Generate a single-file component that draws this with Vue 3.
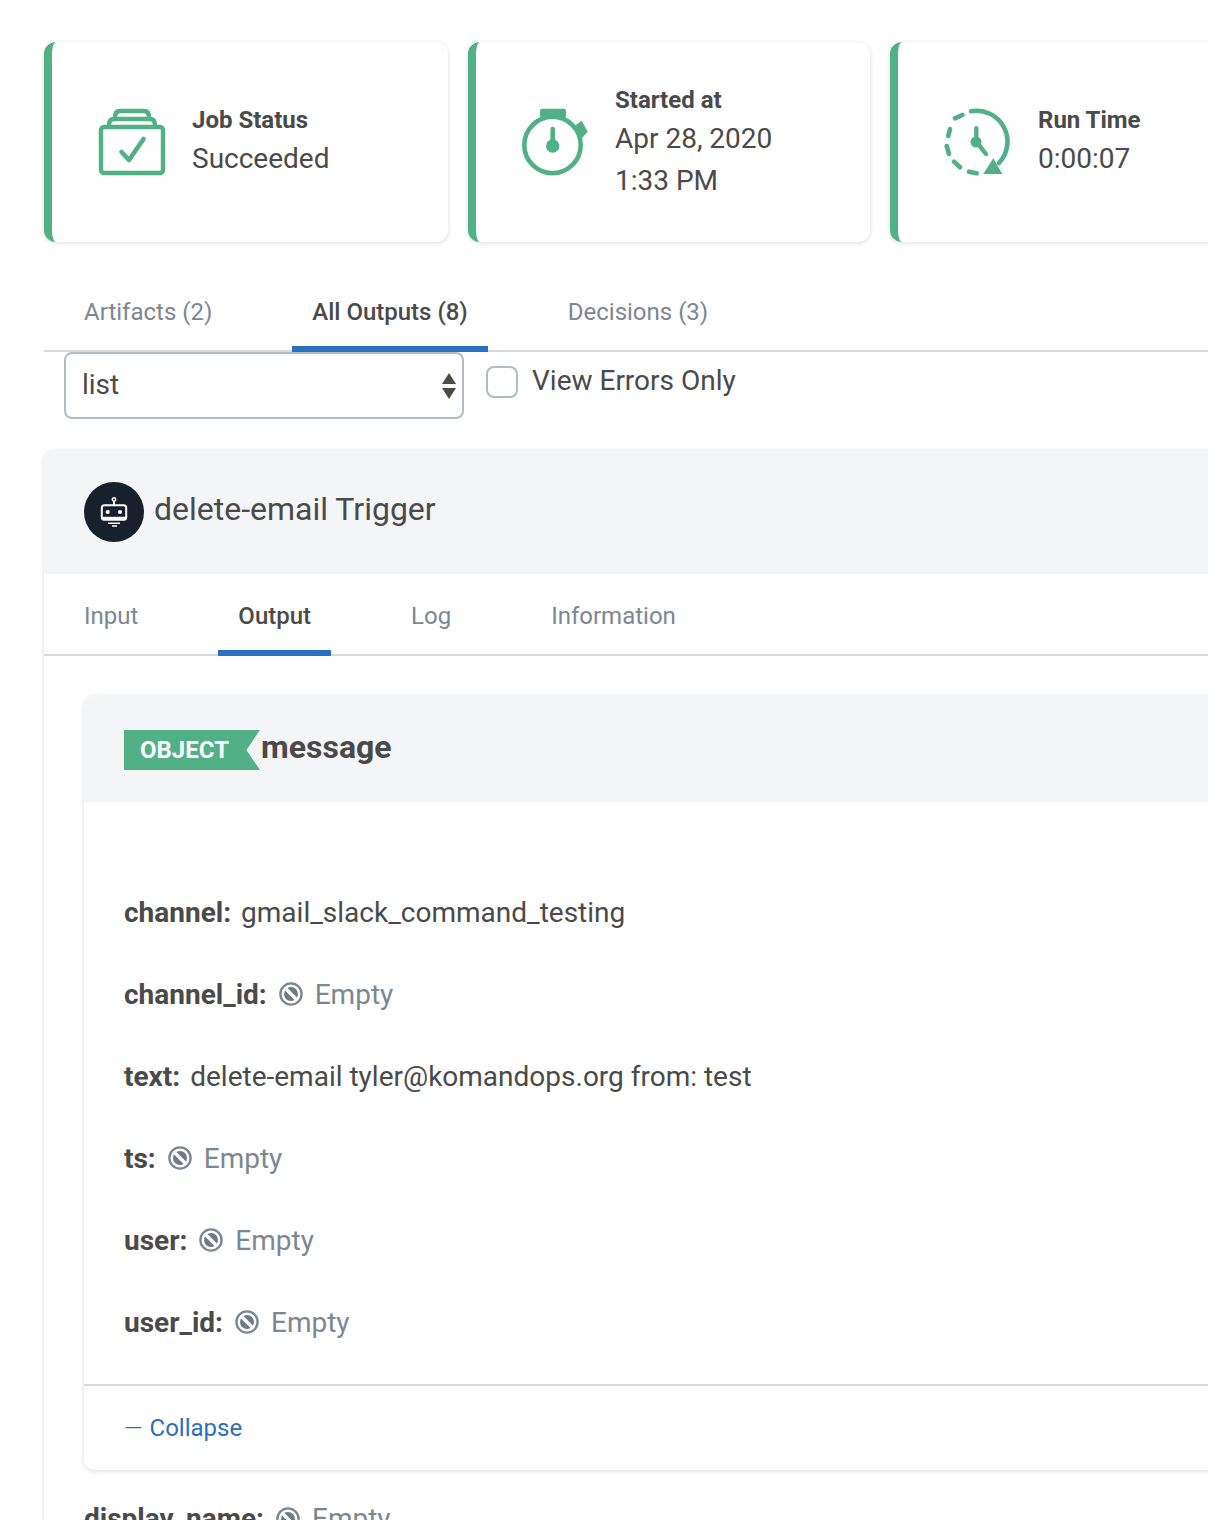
<script setup>
const cards = [
  { title: 'Job Status', lines: ['Succeeded'], icon: 'job' },
  { title: 'Started at', lines: ['Apr 28, 2020', '1:33 PM'], icon: 'watch' },
  { title: 'Run Time', lines: ['0:00:07'], icon: 'run' }
]
const topTabs = [
  { label: 'Artifacts (2)' },
  { label: 'All Outputs (8)', active: true },
  { label: 'Decisions (3)' }
]
const subTabs = [
  { label: 'Input' },
  { label: 'Output', active: true },
  { label: 'Log' },
  { label: 'Information' }
]
const rows = [
  { key: 'channel', value: 'gmail_slack_command_testing' },
  { key: 'channel_id' },
  { key: 'text', value: 'delete-email tyler@komandops.org from: test' },
  { key: 'ts' },
  { key: 'user' },
  { key: 'user_id' }
]
</script>

<template>
  <div class="page">
    <div class="cards">
      <div v-for="c in cards" :key="c.title" class="card" :class="'card-' + c.icon">
        <svg v-if="c.icon === 'job'" class="icon" viewBox="0 0 68 68" fill="none" stroke="#52b087" stroke-width="4.4" stroke-linecap="round" stroke-linejoin="round">
          <rect x="3" y="19" width="62" height="46" rx="3" />
          <path d="M11 17c0-4 2-6 5-6h36c3 0 5 2 5 6" />
          <path d="M17 9c0-4 2-6 5-6h24c3 0 5 2 5 6" />
          <path d="M23.500 44l7.500 8L45.500 31" stroke-width="4.600" />
        </svg>
        <svg v-else-if="c.icon === 'watch'" class="icon" viewBox="0 0 68 68" fill="none" stroke="#52b087" stroke-width="4.600" stroke-linecap="round">
          <circle cx="30.500" cy="37" r="28.200" />
          <rect x="18" y="0.700" width="26" height="9" rx="2" fill="#52b087" stroke="none" />
          <path d="M51 19l8.700-6.300 6 11L60 30z" fill="#52b087" stroke="none" />
          <path d="M30.700 21v17" stroke-width="4.600" />
          <circle cx="30.700" cy="38" r="6.700" fill="#52b087" stroke="none" />
        </svg>
        <svg v-else class="icon" viewBox="0 0 68 68" fill="none" stroke="#52b087" stroke-width="4.600" stroke-linecap="round">
          <path d="M27 3.200A31 31 0 0 1 55 55" />
          <path d="M11 10.300 18.300 7M4.300 28 6 21M2.700 38 5 46M10 53.700 16 59.300M25 63.700 32.700 65.300" />
          <path d="M49.300 50.300 39.300 66H58.300z" fill="#52b087" stroke="none" />
          <path d="M32.300 20.300V33.700L42 46" stroke-width="4.400" />
          <circle cx="32" cy="34" r="5.500" fill="#52b087" stroke="none" />
        </svg>
        <div class="card-text">
          <div class="card-title">{{ c.title }}</div>
          <div v-for="l in c.lines" :key="l" class="card-line">{{ l }}</div>
        </div>
      </div>
    </div>

    <div class="tabs top-tabs">
      <div v-for="t in topTabs" :key="t.label" class="tab" :class="{ active: t.active }">{{ t.label }}</div>
    </div>

    <div class="filters">
      <div class="select">
        <span>list</span>
        <svg class="arrows" width="14" height="26" viewBox="0 0 14 26" fill="#4a4a4a">
          <path d="M7 0l7 11H0z" />
          <path d="M7 26l7-11H0z" />
        </svg>
      </div>
      <label class="check">
        <span class="box"></span>
        <span class="check-label">View Errors Only</span>
      </label>
    </div>

    <div class="panel">
      <div class="panel-head">
        <span class="avatar">
          <svg width="30" height="30" viewBox="0 0 30 30" fill="none" stroke="#fff" stroke-width="2">
            <circle cx="15" cy="2.500" r="1.700" stroke-width="1.500" />
            <path d="M15 4.500v3.700" />
            <rect x="2.800" y="8.200" width="24.400" height="14.600" rx="2.500" />
            <path d="M3 21.300h24" stroke-width="3" />
            <path d="M9 26.300h12M13 29h5" stroke-width="1.600" />
            <circle cx="8.700" cy="15" r="2.100" fill="#fff" stroke="none" />
            <circle cx="21" cy="15" r="2.100" fill="#fff" stroke="none" />
          </svg>
        </span>
        <span class="panel-title">delete-email Trigger</span>
      </div>
      <div class="tabs sub-tabs">
        <div v-for="t in subTabs" :key="t.label" class="tab" :class="{ active: t.active }">{{ t.label }}</div>
      </div>
      <div class="panel-body">
        <div class="object">
          <div class="object-head">
            <span class="tag">OBJECT</span>
            <span class="object-name">message</span>
          </div>
          <div class="object-body">
            <div v-for="r in rows" :key="r.key" class="row">
              <b>{{ r.key }}:</b>
              <span v-if="r.value" class="value">{{ r.value }}</span>
              <span v-else class="empty">
                <svg width="24" height="24" viewBox="0 0 24 24" fill="none" stroke="#7c8791">
                  <circle cx="12" cy="12" r="10.600" stroke-width="2.400" />
                  <circle cx="12" cy="12" r="7" fill="#6f7a84" stroke="none" />
                  <path d="M6 6l12 12" stroke="#fff" stroke-width="3.400" />
                </svg>
                Empty
              </span>
            </div>
          </div>
          <div class="object-foot"><span class="dash">—</span> Collapse</div>
        </div>
        <div class="row after">
          <b>display_name:</b>
          <span class="empty">
            <svg width="24" height="24" viewBox="0 0 24 24" fill="none" stroke="#7c8791">
              <circle cx="12" cy="12" r="10.600" stroke-width="2.400" />
              <circle cx="12" cy="12" r="7" fill="#6f7a84" stroke="none" />
              <path d="M6 6l12 12" stroke="#fff" stroke-width="3.400" />
            </svg>
            Empty
          </span>
        </div>
      </div>
    </div>
  </div>
</template>

<style scoped>
.page {
  width: 1208px;
  height: 1520px;
  overflow: hidden;
  box-sizing: border-box;
  padding: 42px 0 0 44px;
  background: #fff;
  font-family: Roboto, "Liberation Sans", sans-serif;
  color: #4a4a4a;
}
.cards {
  display: flex;
  gap: 20px;
  width: 1300px;
}
.card {
  box-sizing: border-box;
  width: 404px;
  height: 200px;
  flex: none;
  display: flex;
  align-items: center;
  gap: 26px;
  padding-left: 46px;
  padding-bottom: 2px;
  border-left: 8px solid #52b087;
  border-radius: 12px;
  background: #fff;
  box-shadow: 0 1px 5px rgba(0, 0, 0, 0.14);
}
.card-watch {
  width: 402px;
  gap: 25px;
  padding-bottom: 0;
}
.card .icon {
  position: relative;
  top: 1px;
}
.card-watch .icon {
  top: 0;
}
.icon {
  width: 68px;
  height: 68px;
  flex: none;
}
.card-title {
  font-size: 24px;
  font-weight: 700;
  line-height: 36px;
}
.card-line {
  font-size: 28px;
  line-height: 42px;
}
.tabs {
  display: flex;
  gap: 60px;
  padding-left: 20px;
  border-bottom: 2px solid #d5d9dc;
  font-size: 24px;
}
.tab {
  box-sizing: border-box;
  padding: 0 20px;
  line-height: 68px;
  height: 74px;
  margin-bottom: -2px;
  color: #7c8791;
}
.sub-tabs .tab {
  line-height: 84px;
  height: 82px;
}
.tab.active {
  color: #4a4a4a;
  font-weight: 500;
  border-bottom: 6px solid #2b6fc2;
}
.top-tabs {
  margin-top: 36px;
}
.filters {
  display: flex;
  align-items: flex-start;
  gap: 22px;
  padding-left: 20px;
}
.select {
  box-sizing: border-box;
  width: 400px;
  height: 67px;
  display: flex;
  align-items: center;
  justify-content: space-between;
  padding: 0 6px 2px 16px;
  border: 2px solid #b3bcc4;
  border-radius: 8px;
  font-size: 28px;
}
.arrows {
  flex: none;
  position: relative;
  top: 1px;
}
.check {
  display: flex;
  align-items: center;
  gap: 14px;
  margin-top: 14px;
  font-size: 28px;
}
.check-label {
  margin-top: -4px;
}
.box {
  box-sizing: border-box;
  width: 32px;
  height: 32px;
  border: 2px solid #b3bcc4;
  border-radius: 8px;
}
.panel {
  margin-top: 31px;
  width: 1300px;
  border-radius: 10px;
  box-shadow: 0 1px 5px rgba(0, 0, 0, 0.14);
  background: #fff;
}
.panel-head {
  height: 124px;
  box-sizing: border-box;
  padding-left: 40px;
  display: flex;
  align-items: center;
  gap: 10px;
  background: #f4f5f7;
  border-radius: 10px 10px 0 0;
}
.avatar {
  width: 60px;
  height: 60px;
  border-radius: 50%;
  background: #18212b;
  display: flex;
  align-items: center;
  justify-content: center;
}
.panel-title {
  font-size: 32px;
  padding-bottom: 6px;
}
.panel-body {
  padding: 40px 0 0 40px;
}
.object {
  border-radius: 10px;
  box-shadow: 0 1px 5px rgba(0, 0, 0, 0.14);
  background: #fff;
}
.object-head {
  height: 106px;
  box-sizing: border-box;
  padding: 34px 0 0 40px;
  display: flex;
  align-items: flex-start;
  background: #f4f5f7;
  border-radius: 10px 10px 0 0;
}
.tag {
  width: 136px;
  height: 40px;
  box-sizing: border-box;
  padding-left: 16px;
  line-height: 40px;
  background: #52b087;
  color: #fff;
  font-size: 24px;
  font-weight: 700;
  clip-path: polygon(0 0, 100% 0, 90% 50%, 100% 100%, 0 100%);
}
.object-name {
  margin-left: 1px;
  font-size: 32px;
  font-weight: 700;
  line-height: 34px;
}
.object-body {
  padding: 69px 40px 21px;
  border-bottom: 2px solid #d5d9dc;
}
.row {
  display: flex;
  align-items: center;
  gap: 11px;
  height: 82px;
  font-size: 28px;
}
.row b {
  font-weight: 700;
}
.value {
  margin-left: -1px;
}
.empty {
  display: inline-flex;
  align-items: center;
  gap: 12px;
  margin-left: 1px;
  color: #7c8791;
}
.object-foot {
  height: 84px;
  box-sizing: border-box;
  padding-left: 40px;
  display: flex;
  align-items: center;
  gap: 7px;
  color: #2b6fc2;
  font-size: 24px;
}
.dash {
  font-weight: 300;
}
.row.after {
  height: auto;
  margin-top: 32px;
}
</style>
